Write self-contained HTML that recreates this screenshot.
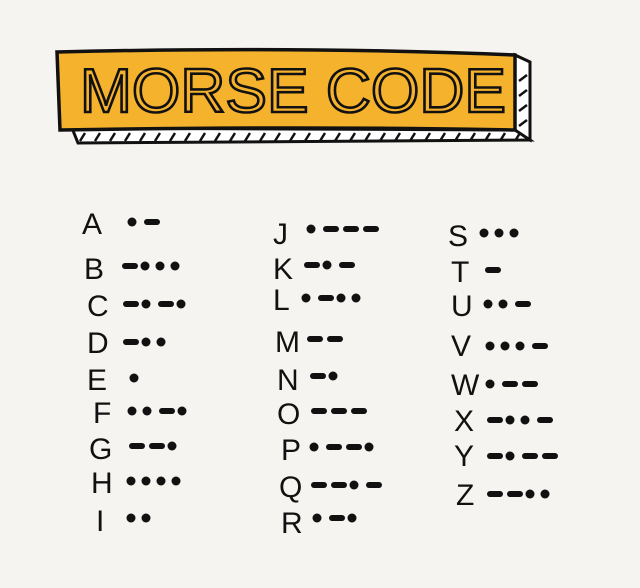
<!DOCTYPE html>
<html><head><meta charset="utf-8"><style>
html,body{margin:0;padding:0;background:#f5f4f0;}
svg{display:block}
.l text{font-family:"Liberation Sans Narrow","Liberation Sans",sans-serif;fill:#111;}
</style></head><body>
<svg id="s" width="640" height="588" viewBox="0 0 640 588">
<rect width="640" height="588" fill="#f5f4f0"/>
<polygon points="515,55 530,62 530,140 515,132" fill="#fff" stroke="#111" stroke-width="3"/>
<polygon points="72,128 515,130 530,140 78,143" fill="#fff" stroke="#111" stroke-width="3"/>
<g stroke="#111" stroke-width="2.5">
<path d="M85,133l-5,8M100,133l-5,8M115,133l-5,8M130,133l-5,8M145,133l-5,8M160,133l-5,8M175,133l-5,8M190,133l-5,8M205,133l-5,8M220,133l-5,8M235,133l-5,8M250,133l-5,8M265,133l-5,8M280,133l-5,8M295,133l-5,8M310,133l-5,8M325,133l-5,8M340,133l-5,8M355,133l-5,8M370,133l-5,8M385,133l-5,8M400,133l-5,8M415,133l-5,8M430,133l-5,8M445,133l-5,8M460,133l-5,8M475,133l-5,8M490,133l-5,8M505,133l-5,8M520,133l-5,8"/>
<path d="M527,75l-8,6M527,90l-8,6M527,105l-8,6M527,120l-8,6"/>
</g>
<path d="M57,52 Q300,46 515,55 L515,130 Q300,126 60,130 Z" fill="#f5b22d" stroke="#111" stroke-width="3.5"/>
<text x="80" y="112" font-size="62" textLength="426" lengthAdjust="spacingAndGlyphs" style="font-family:'Liberation Sans Narrow','Liberation Sans',sans-serif;fill:none;stroke:#111;stroke-width:2.6">MORSE CODE</text>
<g font-size="30" class="l">
<text x="82" y="234">A</text><text x="84" y="279">B</text><text x="87" y="316">C</text><text x="87" y="353">D</text><text x="87" y="390">E</text><text x="93" y="423">F</text><text x="89" y="459">G</text><text x="91" y="493">H</text><text x="96" y="531">I</text>
<text x="273" y="244">J</text><text x="273" y="279">K</text><text x="273" y="310">L</text><text x="275" y="352">M</text><text x="277" y="390">N</text><text x="277" y="424">O</text><text x="281" y="460">P</text><text x="279" y="497">Q</text><text x="281" y="533">R</text>
<text x="448" y="246">S</text><text x="451" y="282">T</text><text x="451" y="316">U</text><text x="451" y="356">V</text><text x="451" y="395">W</text><text x="454" y="431">X</text><text x="454" y="466">Y</text><text x="456" y="505">Z</text>
</g>
<g id="m" fill="#111" stroke="#111" stroke-width="6" stroke-linecap="round"></g>
</svg>
<script>
var d=[[128,222,".-"],[121,266,"-..."],[122,304,"-.-."],[122,342,"-.."],[130,378,"."],[128,411,"..-."],[128,446,"--."],[127,481,"...."],[127,518,".."],
[307,229,".---"],[303,265,"-.-"],[302,298,".-.."],[306,339,"--"],[309,376,"-."],[310,411,"---"],[310,447,".--."],[310,485,"--.-"],[313,518,".-."],
[480,233,"..."],[484,270,"-"],[484,304,"..-"],[486,346,"...-"],[486,384,".--"],[486,420,"-..-"],[486,456,"-.--"],[486,494,"--.."]];
var g=document.getElementById('m'),h="";
d.forEach(function(r){var x=r[0],y=r[1];for(var c of r[2]){if(c=='.'){h+='<circle cx="'+(x+4)+'" cy="'+y+'" r="4.5" stroke="none"/>';x+=15;}else{h+='<line x1="'+(x+4)+'" y1="'+y+'" x2="'+(x+14)+'" y2="'+y+'"/>';x+=20;}}});
g.innerHTML=h;
</script>
</body></html>
